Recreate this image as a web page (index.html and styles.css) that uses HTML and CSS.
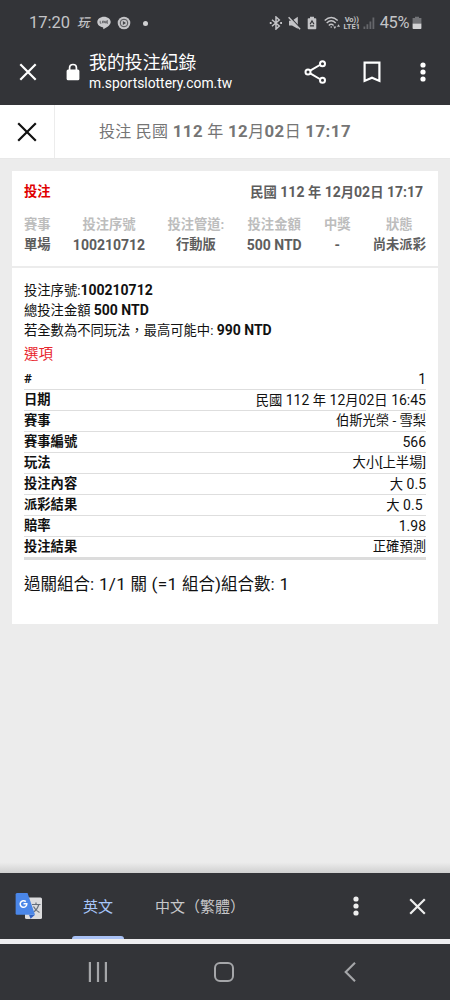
FILE: index.html
```html
<!DOCTYPE html>
<html lang="zh-Hant">
<head>
    <meta charset="UTF-8">
    <meta name="viewport" content="width=device-width, initial-scale=1.0">
    <title>我的投注紀錄</title>
    <link rel="stylesheet" href="styles.css">
</head>
<body>
    <div class="status-bar">
        <div class="status-left">
            <span class="clock">17:20</span>
            <span class="app-mark">玩</span>
            <svg class="line-icon" width="14" height="14" viewBox="0 0 14 14">
                <path d="M7 .7C3.3.7.3 3 .3 6c0 2.600 2.300 4.700 5.400 5.200.9.2.5 1.100.5 2.100 2.700-1.300 7.500-4 7.500-7.300C13.700 3 10.700.7 7 .7z" fill="#cacacd"/>
                <path d="M3.200 4.800v2.400h1.200M5.500 4.800v2.400M6.800 7.200V4.800l1.500 2.400V4.800M11 4.800H9.700v2.400H11M9.700 6H11" fill="none" stroke="#45464a" stroke-width=".7"/>
            </svg>
            <svg class="play-icon" width="14" height="14" viewBox="0 0 14 14">
                <circle cx="7" cy="7" r="6.300" fill="#c4c4c7"/>
                <circle cx="7" cy="7" r="3.800" fill="none" stroke="#45464a" stroke-width=".9"/>
                <path d="M5.900 5v4l3.100-2z" fill="#45464a"/>
            </svg>
            <span class="dot"></span>
        </div>
        <div class="status-right">
            <svg class="bluetooth" width="14" height="14" viewBox="0 0 14 14" fill="none" stroke="#c4c4c7" stroke-width="1.500">
                <path d="M3 3.800l7.300 6.200L7 13V1l3.300 3L3 10.200"/>
                <path d="M.8 7h1.800M11.200 7H13" stroke-width="1.900"/>
            </svg>
            <svg class="mute" width="13" height="14" viewBox="0 0 13 14">
                <path d="M1 4.800h3L9.800.8v12L4 9.500H1z" fill="#c4c4c7"/>
                <path d="M1.700.8l11 12" stroke="#333438" stroke-width="1.400"/>
                <path d="M.6 1.300l11.500 12" stroke="#c4c4c7" stroke-width="1.500"/>
            </svg>
            <svg class="saver" width="10" height="14" viewBox="0 0 10 14">
                <path d="M3 .8h4v1.400h1.500q.8 0 .8.800v9.300q0 .9-.8.900h-7q-.8 0-.8-.9V3q0-.8.8-.8H3z" fill="#c4c4c7"/>
                <path d="M3.100 8.200L5 5l2 3.200M3 9.800h4" fill="none" stroke="#333438" stroke-width="1.200"/>
            </svg>
            <svg class="wifi" width="17" height="14" viewBox="0 0 17 14" fill="none" stroke="#c4c4c7" stroke-width="1.400">
                <path d="M.7 4.500q6.500-6 13 0M2.700 7q4.500-4.300 9 0M4.800 9.400q2.400-2.300 4.800 0"/>
                <circle cx="7.200" cy="11" r=".8" fill="#c4c4c7" stroke="none"/>
                <path d="M9.300 10.500h3L10.800 13zM13 10.800h3l-1.500-2.600z" fill="#c4c4c7" stroke="none"/>
            </svg>
            <span class="volte"><span>Vo))</span><span>LTE1</span></span>
            <svg class="signal" width="12" height="12" viewBox="0 0 12 12">
                <path d="M.5 9.500h1.800V12H.5zM3.500 7.200h1.800V12H3.500zM6.500 4.500h1.800V12H6.500zM9.500.5h1.800V12H9.500z" fill="#66676b"/>
            </svg>
            <span class="percent">45%</span>
            <svg class="battery" width="10" height="14" viewBox="0 0 10 14">
                <path d="M3 .8h4v1.300h2.400v5.300H.6V2.100H3z" fill="#727377"/>
                <path d="M.6 7.400h8.800v4.800q0 .8-.8.800H1.400q-.8 0-.8-.8z" fill="#d4d4d6"/>
            </svg>
        </div>
    </div>

    <div class="toolbar">
        <svg class="close" width="18" height="18" viewBox="0 0 18 18" fill="none" stroke="#fff" stroke-width="2.200">
            <path d="M1.300 1.300l15.400 15.400M16.700 1.300L1.300 16.700"/>
        </svg>
        <svg class="lock" width="14" height="18" viewBox="0 0 14 18">
            <path d="M3.600 7.500V4.800q0-3.300 3.400-3.300t3.400 3.300v2.700" fill="none" stroke="#fff" stroke-width="1.700"/>
            <rect x=".6" y="6.500" width="12.800" height="10.800" rx="1.500" fill="#fff"/>
        </svg>
        <div class="page-info">
            <div class="page-title">我的投注紀錄</div>
            <div class="page-url">m.sportslottery.com.tw</div>
        </div>
        <div class="toolbar-actions">
            <svg class="share" width="24" height="26" viewBox="0 0 24 26" fill="none" stroke="#fff" stroke-width="2">
                <path d="M6.200 11.700L15.800 6M6.200 14.300l9.600 5.700"/>
                <circle cx="4" cy="13" r="2.500"/>
                <circle cx="18.500" cy="4.800" r="2.500"/>
                <circle cx="18.500" cy="21.200" r="2.500"/>
            </svg>
            <svg class="bookmark" width="18" height="22" viewBox="0 0 18 22" fill="none" stroke="#fff" stroke-width="2.200">
                <path d="M1.600 1.700h14.800v18.200L9 16.700l-7.400 3.200z"/>
            </svg>
            <svg width="6" height="20" viewBox="0 0 6 20" fill="#fff">
                <circle cx="3" cy="3" r="2.600"/>
                <circle cx="3" cy="10" r="2.600"/>
                <circle cx="3" cy="17" r="2.600"/>
            </svg>
        </div>
    </div>

    <div class="page-header">
        <div class="header-close">
            <svg width="20" height="20" viewBox="0 0 20 20" fill="none" stroke="#111" stroke-width="2.200">
                <path d="M1.200 1.200l17.600 17.600M18.800 1.200L1.200 18.800"/>
            </svg>
        </div>
        <div class="header-title">投注 民國 <b>112</b> 年 <b>12</b>月<b>02</b>日 <b>17:17</b></div>
    </div>

    <div class="content">
        <div class="card">
            <div class="summary">
                <div class="summary-top">
                    <span class="red">投注</span>
                    <span class="date">民國<span class="num"> 112 </span>年<span class="num"> 12</span>月<span class="num">02</span>日<span class="num"> 17:17</span></span>
                </div>
                <div class="columns">
                    <div class="column"><span class="label">賽事</span><span>單場</span></div>
                    <div class="column"><span class="label">投注序號</span><span class="num">100210712</span></div>
                    <div class="column"><span class="label">投注管道:</span><span>行動版</span></div>
                    <div class="column"><span class="label">投注金額</span><span class="num">500 NTD</span></div>
                    <div class="column"><span class="label">中獎</span><span class="num">-</span></div>
                    <div class="column"><span class="label">狀態</span><span>尚未派彩</span></div>
                </div>
            </div>
            <div class="details">
                <p>投注序號:<b class="num">100210712</b></p>
                <p>總投注金額 <b class="num">500 NTD</b></p>
                <p>若全數為不同玩法，最高可能中: <b class="num">990 NTD</b></p>
                <h2>選項</h2>
                <div class="rows">
                    <div class="row"><b>#</b><span class="num">1</span></div>
                    <div class="row"><b>日期</b><span>民國<span class="num"> 112 </span>年<span class="num"> 12</span>月<span class="num">02</span>日<span class="num"> 16:45</span></span></div>
                    <div class="row"><b>賽事</b><span>伯斯光榮 - 雪梨</span></div>
                    <div class="row"><b>賽事編號</b><span class="num">566</span></div>
                    <div class="row"><b>玩法</b><span>大小[上半場]</span></div>
                    <div class="row"><b>投注內容</b><span>大<span class="num"> 0.5</span></span></div>
                    <div class="row"><b>派彩結果</b><span>大<span class="num"> 0.5&nbsp;</span></span></div>
                    <div class="row"><b>賠率</b><span class="num">1.98</span></div>
                    <div class="row"><b>投注結果</b><span>正確預測</span></div>
                </div>
                <div class="combo">過關組合<span class="num">: 1/1 </span>關<span class="num"> (=1 </span>組合<span class="num">)</span>組合數<span class="num">: 1</span></div>
            </div>
        </div>
    </div>

    <div class="translate-bar">
        <svg class="translate-icon" width="28" height="28" viewBox="0 0 28 28">
            <rect x="10" y="5.500" width="17" height="21.500" rx="1.500" fill="#dcdcde"/>
            <path d="M17 12.500h8.500M21 10.500v2M23.800 12.500q-1.500 5.500-6 8M18.500 14.500q2 4 6 6" fill="none" stroke="#67707c" stroke-width="1.200"/>
            <path d="M14 22.800h6l-4.500 4z" fill="#2f5fc0"/>
            <path d="M2 1h10.500L20 22.800H2Q.6 22.800.6 21.300V2.500Q.6 1 2 1z" fill="#4a86e8"/>
            <path d="M10.800 9.600a3.300 3.300 0 1 0 1 2.200H8.500" fill="none" stroke="#fff" stroke-width="1.500"/>
        </svg>
        <div class="tab active">英文</div>
        <div class="tab">中文（繁體）</div>
        <div class="translate-actions">
            <svg width="6" height="20" viewBox="0 0 6 20" fill="#eee">
                <circle cx="3" cy="3" r="2.600"/>
                <circle cx="3" cy="10" r="2.600"/>
                <circle cx="3" cy="17" r="2.600"/>
            </svg>
            <svg width="17" height="17" viewBox="0 0 17 17" fill="none" stroke="#eee" stroke-width="2.200">
                <path d="M1.200 1.200l14.600 14.600M15.800 1.200L1.200 15.800"/>
            </svg>
        </div>
    </div>

    <div class="nav-bar">
        <svg class="recents" width="20" height="20" viewBox="0 0 20 20" stroke="#a5a6a9" stroke-width="2.200">
            <path d="M1.900 0v20M10 0v20M17.900 0v20"/>
        </svg>
        <svg class="home" width="20" height="20" viewBox="0 0 20 20" fill="none" stroke="#a5a6a9" stroke-width="2">
            <rect x="1" y="1" width="18" height="18" rx="5"/>
        </svg>
        <svg class="back" width="12" height="20" viewBox="0 0 12 20" fill="none" stroke="#a5a6a9" stroke-width="2.100">
            <path d="M11 .8L1.700 10l9.300 9.200"/>
        </svg>
    </div>
</body>
</html>
```
FILE: styles.css
```css
* {
    margin: 0;
    padding: 0;
    box-sizing: border-box;
}

body {
    width: 450px;
    height: 1000px;
    display: flex;
    flex-direction: column;
    overflow: hidden;
    background: #ececec;
    color: #111;
    font-family: Roboto, "Noto Sans CJK TC", sans-serif;
    font-size: 13.3px;
}

svg {
    display: block;
    flex-shrink: 0;
}

.status-bar {
    height: 46px;
    padding: 0 28px 0 29px;
    background: #333438;
    color: #c4c4c7;
    display: flex;
    align-items: center;
    justify-content: space-between;
}

.status-left,
.status-right {
    display: flex;
    align-items: center;
}

.clock {
    width: 48px;
    font-size: 16.5px;
    line-height: 20px;
}

.app-mark {
    width: 20px;
    font-size: 12.5px;
    line-height: 16px;
    font-weight: 500;
    font-style: italic;
}

.play-icon {
    margin-left: 6px;
}

.dot {
    width: 5px;
    height: 5px;
    margin-left: 12px;
    border-radius: 50%;
    background: #d0d0d2;
}

.mute {
    margin-left: 5px;
}

.saver {
    margin-left: 6px;
}

.wifi {
    margin-left: 7px;
}

.volte {
    width: 18px;
    margin-left: 2px;
    display: flex;
    flex-direction: column;
    align-items: center;
    font-size: 7.5px;
    line-height: 7px;
    font-weight: 700;
    white-space: nowrap;
}

.signal {
    margin-left: 2px;
}

.percent {
    margin-left: 5px;
    font-size: 16.4px;
    line-height: 20px;
    letter-spacing: -0.4px;
}

.battery {
    margin-left: 3px;
}

.toolbar {
    height: 59px;
    padding: 0 24px 8px 19px;
    background: #333438;
    color: #fff;
    display: flex;
    align-items: center;
}

.lock {
    margin-left: 29px;
}

.page-info {
    margin-left: 9px;
    padding-top: 1px;
}

.page-title {
    font-size: 17.9px;
    line-height: 23px;
}

.page-url {
    font-size: 13.85px;
    line-height: 19px;
}

.toolbar-actions {
    margin-left: auto;
    display: flex;
    align-items: center;
}

.share {
    margin-right: 35px;
}

.bookmark {
    margin-right: 39px;
}

.page-header {
    height: 54px;
    background: #fff;
    border-bottom: 1px solid #e8e8e8;
    display: flex;
    align-items: stretch;
}

.header-close {
    width: 55px;
    border-right: 1px solid #ececec;
    display: flex;
    align-items: center;
    justify-content: center;
}

.header-title {
    flex: 1;
    padding-right: 55px;
    text-align: center;
    color: #757575;
    font-size: 16px;
    line-height: 53px;
    letter-spacing: 0.3px;
}

.header-title b {
    font-size: 16.8px;
    letter-spacing: 0.5px;
}

.content {
    flex: 1;
    padding: 12px;
    background: linear-gradient(#ececec 98.5%, #d0d0d0);
}

.card {
    height: 453px;
    background: #fff;
}

/* latin digits run slightly larger than the chinese text */
.num {
    font-size: 14px;
}

.summary {
    height: 97px;
    padding: 11px 12px 0;
    border-bottom: 2px solid #ececec;
    color: #5d5d5d;
    font-weight: 700;
}

.summary-top {
    padding-right: 3px;
    display: flex;
    justify-content: space-between;
    line-height: 20px;
}

.red {
    color: #e00000;
}

.columns {
    margin-top: 12px;
    display: flex;
    justify-content: space-between;
    white-space: nowrap;
}

.column {
    display: flex;
    flex-direction: column;
    align-items: center;
    line-height: 20px;
}

.label {
    color: #bdbdbd;
    font-weight: 700;
}

.details {
    padding: 12px 12px 0;
}

.details p {
    height: 20px;
    line-height: 20px;
}

.details h2 {
    margin: 4px 0 3px;
    color: #e8262d;
    font-size: 14.5px;
    font-weight: 400;
    line-height: 22px;
}

.rows {
    border-bottom: 3px solid #dcdcdc;
}

.row {
    height: 20.95px;
    display: flex;
    justify-content: space-between;
    border-bottom: 1px solid #dedede;
    line-height: 20px;
}

.row:last-child {
    border-bottom: none;
}

.combo {
    margin-top: 12px;
    font-size: 16.5px;
    line-height: 24px;
}

.combo .num {
    font-size: 17.2px;
    letter-spacing: 0.25px;
}

.translate-bar {
    height: 66px;
    padding: 0 24px 0 15px;
    background: #333438;
    color: #c8c8ca;
    display: flex;
    align-items: center;
}

.tab {
    height: 66px;
    padding: 0 11px;
    margin-left: 20px;
    font-size: 15px;
    line-height: 69px;
}

.tab.active {
    margin-left: 29px;
    color: #a8c7fa;
    position: relative;
}

.tab.active::after {
    content: "";
    position: absolute;
    left: 0;
    right: 0;
    bottom: 0;
    height: 3px;
    border-radius: 3px 3px 0 0;
    background: #a9c1f5;
}

.translate-actions {
    margin-left: auto;
    display: flex;
    align-items: center;
    gap: 50px;
}

.nav-bar {
    height: 61px;
    padding: 0 94px 0 88px;
    border-top: 5px solid #ededf0;
    background: #333438;
    display: flex;
    align-items: center;
}

.home {
    margin-left: 106px;
}

.back {
    margin-left: auto;
}
```
